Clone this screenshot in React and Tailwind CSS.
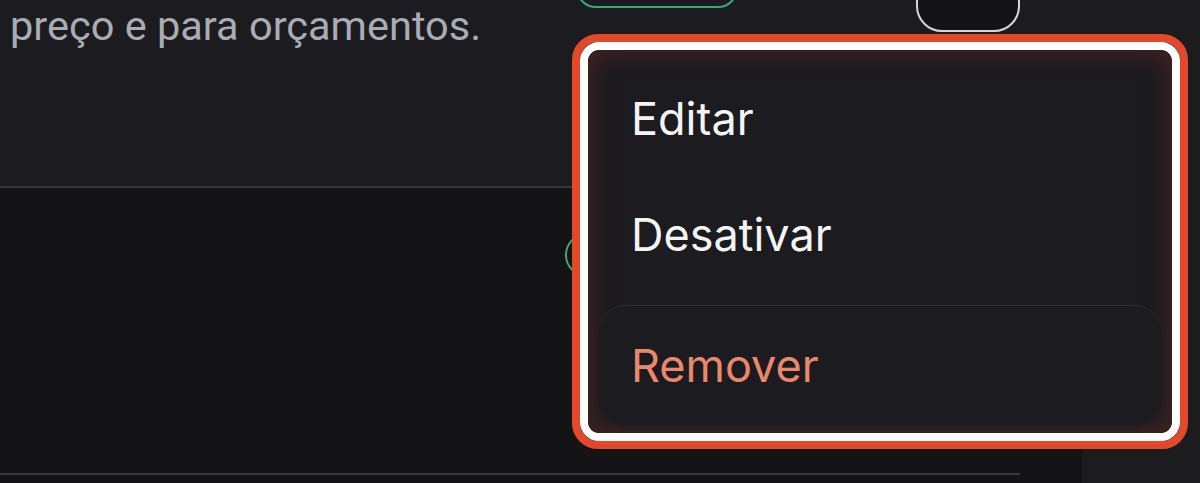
import React from "react";

const items = [
  { label: "Editar" },
  { label: "Desativar" },
];

const ActionMenu = () => {
  return (
    <div className="absolute left-[572px] top-[34px] w-[616px] h-[415px] rounded-[26px] border-[8px] border-[#e2482a]">
      <div className="w-full h-full rounded-[19px] border-[8px] border-white">
        <div
          className="flex flex-col w-full h-full rounded-[13px] bg-[#1c1b20] px-[10px] pt-[11px]
          shadow-[inset_0_0_26px_rgba(120,45,32,0.55)] font-['Inter',sans-serif]"
        >
          {items.map((item) => (
            <div key={item.label} className="flex items-center h-[116px] px-[33px]">
              <p className="text-[45px] leading-[56px] text-[#f4f4f5]">{item.label}</p>
            </div>
          ))}
          <div className="mt-[12px] h-[121px] rounded-[28px] border-t border-[#303036] bg-[#1c1b20] px-[33px] pt-[32px]">
            <p className="text-[45px] leading-[56px] text-[#ea876c]">Remover</p>
          </div>
        </div>
      </div>
    </div>
  );
};

const App = () => {
  return (
    <div className="relative flex w-[1200px] h-[483px] overflow-hidden bg-[#1b1b1e] font-['Roboto',sans-serif]">
      <div className="flex flex-col w-[1082px] h-full">
        <div className="flex h-[188px] bg-[#1c1b20] border-b-2 border-[#36363b]">
          <div className="w-[566px] pl-[10px] pt-[2px]">
            <p className="text-[41.5px] leading-[48px] text-[#a9acb4] whitespace-nowrap">
              preço e para orçamentos.
            </p>
          </div>
          <div className="flex items-start gap-[178px] pl-[10px]">
            <div className="w-[162px] h-[40px] -mt-[32px] rounded-full border-2 border-[#3aa97a]"></div>
            <div className="w-[104px] h-[60px] -mt-[28px] rounded-[26px] border-2 border-[#d6d6da] bg-[#141416]"></div>
          </div>
        </div>
        <div className="flex flex-1 bg-[#141416]">
          <div className="flex flex-col w-[1020px] h-[287px] border-b-2 border-[#38383d]">
            <div className="ml-[565px] mt-[45px] w-[60px] h-[44px] rounded-full border-2 border-[#3aa97a]"></div>
          </div>
        </div>
      </div>
      <div className="flex-1 h-full bg-[#1c1c1f]"></div>
      <ActionMenu />
    </div>
  );
};

export default App;
